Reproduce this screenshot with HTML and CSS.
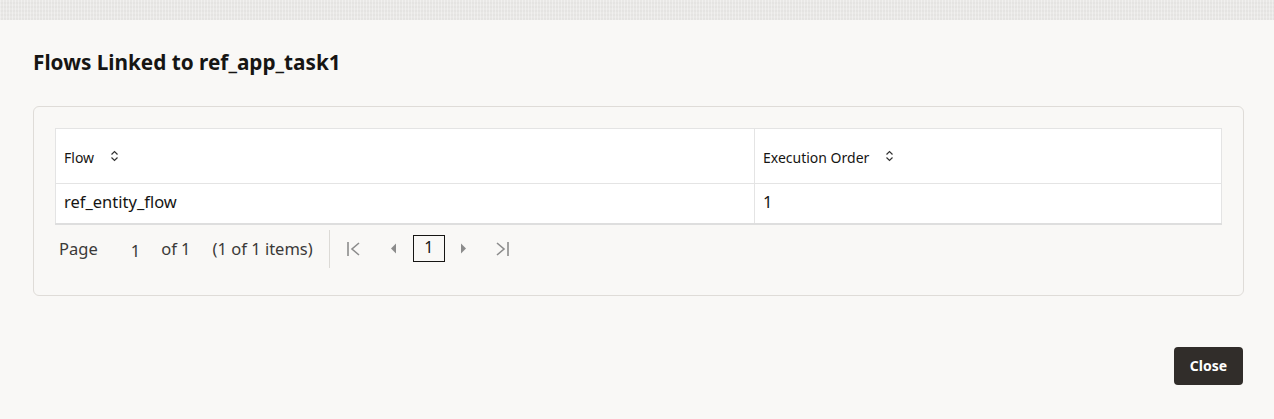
FILE: index.html
```html
<!DOCTYPE html>
<html lang="en">
<head>
<meta charset="utf-8">
<title>Flows Linked</title>
<link rel="stylesheet" href="styles.css">
</head>
<body>
<div class="strip"></div>
<div class="dialog">
  <h1 class="title">Flows Linked to ref_app_task1</h1>
  <div class="panel">
    <table class="grid">
      <thead>
        <tr>
          <th class="col-flow"><span>Flow</span>
            <svg class="sort" width="9" height="12" viewBox="0 0 9 12"><path d="M1.5 4.5 L4.5 1.5 L7.5 4.5 M1.5 7.5 L4.5 10.5 L7.5 7.5" fill="none" stroke="#333" stroke-width="1.2"/></svg>
          </th>
          <th class="col-order"><span>Execution Order</span>
            <svg class="sort" width="9" height="12" viewBox="0 0 9 12"><path d="M1.5 4.5 L4.5 1.5 L7.5 4.5 M1.5 7.5 L4.5 10.5 L7.5 7.5" fill="none" stroke="#333" stroke-width="1.2"/></svg>
          </th>
        </tr>
      </thead>
      <tbody>
        <tr>
          <td>ref_entity_flow</td>
          <td>1</td>
        </tr>
      </tbody>
    </table>
    <div class="pager">
      <span class="p-label">Page</span>
      <span class="p-cur">1</span>
      <span class="p-of">of 1</span>
      <span class="p-items">(1 of 1 items)</span>
      <span class="p-sep"></span>
      <svg class="p-icon first" width="14" height="16" viewBox="0 0 14 16"><path d="M1 1 V15" stroke="#8c8c8c" stroke-width="1.6"/><path d="M12 2 L5 8 L12 14" fill="none" stroke="#8c8c8c" stroke-width="1.6"/></svg>
      <svg class="p-icon prev" width="7" height="11" viewBox="0 0 7 11"><path d="M6 0.5 L1 5.5 L6 10.5 Z" fill="#8c8c8c"/></svg>
      <span class="p-box">1</span>
      <svg class="p-icon next" width="7" height="11" viewBox="0 0 7 11"><path d="M1 0.5 L6 5.5 L1 10.5 Z" fill="#8c8c8c"/></svg>
      <svg class="p-icon last" width="14" height="16" viewBox="0 0 14 16"><path d="M2 2 L9 8 L2 14" fill="none" stroke="#8c8c8c" stroke-width="1.6"/><path d="M13 1 V15" stroke="#8c8c8c" stroke-width="1.6"/></svg>
    </div>
  </div>
  <div class="footer">
    <button class="close-btn">Close</button>
  </div>
</div>
</body>
</html>
```

FILE: styles.css
```css
* { box-sizing: border-box; }
html, body { margin: 0; padding: 0; }
body {
  width: 1274px;
  height: 419px;
  background: #f9f8f6;
  font-family: "Noto Sans", "Open Sans", "Liberation Sans", sans-serif;
  color: #161513;
  overflow: hidden;
}
.strip {
  height: 20px;
  background-color: #e9e8e6;
  background-image: repeating-linear-gradient(90deg, rgba(255,255,255,0.35) 0 1px, transparent 1px 3px),
                    repeating-linear-gradient(0deg, rgba(0,0,0,0.02) 0 2px, transparent 2px 4px);
}
.dialog {
  padding: 0 30px 0 33px;
}
.title {
  margin: 0;
  padding: 28px 0 30px;
  font-size: 20.75px;
  line-height: 28px;
  font-weight: 700;
  color: #161513;
}
.panel {
  border: 1px solid #dfdcd8;
  border-radius: 6px;
  padding: 21px 21px 22px;
  width: 1211px;
}
.grid {
  width: 100%;
  border-collapse: collapse;
  background: #fff;
  border: 1px solid #e4e4e4;
  border-bottom: 2px solid #dedede;
}
.grid th {
  height: 55px;
  text-align: left;
  font-weight: 400;
  font-size: 14px;
  color: #161513;
  padding: 0 8px;
  border-bottom: 1px solid #e4e4e4;
  vertical-align: middle;
}
.grid th span { vertical-align: middle; }
.grid .col-flow { width: 699px; border-right: 1px solid #e4e4e4; }
.sort { margin-left: 12px; vertical-align: middle; position: relative; top: -1px; }
.grid td {
  height: 40px;
  padding: 0 8px 4px;
  font-size: 16.5px;
  color: #161513;
}
.grid td:first-child { border-right: 1px solid #e4e4e4; }
.pager {
  display: flex;
  align-items: center;
  height: 48px;
  padding-left: 4px;
  font-size: 16.5px;
  color: #3b3a38;
}
.p-cur { margin-left: 33px; position: relative; top: 2px; }
.p-of { margin-left: 21px; }
.p-items { margin-left: 22px; }
.p-sep {
  width: 1px;
  height: 38px;
  background: #dcdad6;
  margin-left: 16px;
  margin-right: 17px;
}
.p-icon { display: block; }
.prev { margin-left: 29px; }
.p-box {
  margin-left: 16px;
  width: 32px;
  height: 27px;
  border: 1px solid #161513;
  display: flex;
  align-items: center;
  justify-content: center;
  color: #161513;
  font-size: 16px;
  line-height: 1;
  padding-bottom: 3px;
}
.next { margin-left: 15px; }
.last { margin-left: 28px; }
.footer {
  display: flex;
  justify-content: flex-end;
  padding-top: 51px;
  width: 1210px;
}
.close-btn {
  width: 69px;
  height: 38px;
  background: #312d2a;
  color: #fff;
  border: none;
  border-radius: 4px;
  font-family: inherit;
  font-size: 14px;
  font-weight: 700;
  padding: 0;
}
```
